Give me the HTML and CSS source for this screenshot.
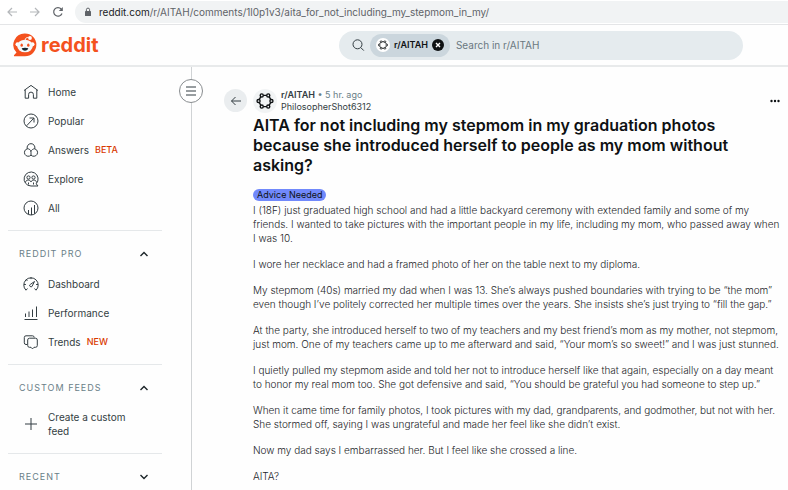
FILE: index.html
```html
<!DOCTYPE html>
<html lang="en">
<head>
<meta charset="UTF-8" />
<meta name="viewport" content="width=device-width, initial-scale=1" />
<title>AITA for not including my stepmom in my graduation photos : r/AITAH</title>
<link rel="stylesheet" href="styles.css">
</head>
<body>
  <!-- Browser bar -->
  <div class="browser-bar">
    <button class="nav-btn dim" aria-label="Back">
      <svg width="12" height="12" viewBox="0 0 12 12"><path d="M11 6H2M6 2L2 6l4 4" /></svg>
    </button>
    <button class="nav-btn dim" aria-label="Forward">
      <svg width="12" height="12" viewBox="0 0 12 12"><path d="M1 6h9M6 2l4 4-4 4" /></svg>
    </button>
    <button class="nav-btn" aria-label="Reload">
      <svg width="12" height="12" viewBox="0 0 12 12"><path d="M10 7.5A4.3 4.3 0 1 1 9.2 3" /><path class="solid" d="M10.8 1v4H6.8z" /></svg>
    </button>
    <div class="address">
      <svg width="8" height="10" viewBox="0 0 8 10"><rect x="1" y="4" width="6" height="5" rx="0.6" fill="#5f6368" /><path d="M2.4 4V2.7a1.6 1.6 0 0 1 3.2 0V4" fill="none" stroke="#5f6368" /></svg>
      <span><b>reddit.com</b>/r/AITAH/comments/1l0p1v3/aita_for_not_including_my_stepmom_in_my/</span>
    </div>
  </div>

  <header>
    <a class="logo" href="#">
      <svg width="24" height="24" viewBox="0 0 24 24">
        <path d="M12 0.5a11.3 11.3 0 1 1 0 22.7H1.6c-.7 0-.9-.7-.4-1.1l2.3-2.5A11.3 11.3 0 0 1 12 .5z" fill="#f4511e" />
        <path d="M12.2 7c.2-2 1.2-2.7 3.3-2.4" fill="none" stroke="#fff" stroke-width="0.9" />
        <circle cx="17" cy="5" r="1.9" fill="#fff" />
        <circle cx="4.6" cy="11.3" r="2.1" fill="#fff" />
        <circle cx="19.4" cy="11.3" r="2.1" fill="#fff" />
        <ellipse cx="12" cy="13" rx="7.8" ry="6.3" fill="#f4f9fb" />
        <ellipse cx="8.7" cy="12.2" rx="1.2" ry="1.6" fill="#f4511e" />
        <ellipse cx="15.3" cy="12.2" rx="1.2" ry="1.6" fill="#f4511e" />
        <path d="M8.7 15.3q3.300-1 6.600 0c-.5 3.300-6.100 3.300-6.600 0z" fill="#16272f" />
      </svg>
      <span>reddit</span>
    </a>
    <div class="search">
      <svg class="icon" width="14" height="14" viewBox="0 0 14 14"><circle cx="6.5" cy="6.3" r="4.5" /><path d="M9.800 9.600l3 3" /></svg>
      <div class="chip">
        <svg class="badge" width="14" height="14" viewBox="0 0 28 28"><circle cx="14" cy="14" r="14" fill="#fff" /><use href="#ring" /></svg>
        <span>r/AITAH</span>
        <button aria-label="Remove filter">
          <svg width="12" height="12" viewBox="0 0 12 12"><circle cx="6" cy="6" r="6" fill="#0e1113" /><path d="M4 4l4 4M8 4l-4 4" stroke="#fff" stroke-width="1.4" /></svg>
        </button>
      </div>
      <input type="text" aria-label="Search" placeholder="Search in r/AITAH" />
    </div>
  </header>

  <div class="layout">
    <nav class="sidebar">
      <button class="menu-toggle" aria-label="Toggle menu">
        <svg class="icon" width="12" height="12" viewBox="0 0 12 12"><path d="M1 2h10M1 6h10M1 10h10" /></svg>
      </button>

      <div class="group">
        <a class="item" href="#">
          <svg class="icon" width="16" height="16" viewBox="0 0 16 16"><path d="M1 6.500L8 1.400l7 5.100M2.200 6v8.200h3.400v-3.700a2.400 2.400 0 0 1 4.800 0v3.700h3.400V6" /></svg>
          <span>Home</span>
        </a>
        <a class="item" href="#">
          <svg class="icon" width="16" height="16" viewBox="0 0 16 16"><circle cx="8" cy="8" r="7" /><path d="M3.700 12.700L10.800 5.200M6.500 5h4.500v4.500" /></svg>
          <span>Popular</span>
        </a>
        <a class="item" href="#">
          <svg class="icon" width="16" height="16" viewBox="0 0 16 16"><path d="M4.300 6.800a3.900 3.900 0 1 1 7.400 0M4.300 6.800a3.800 3.800 0 1 0 3.700 6.300 3.800 3.800 0 1 0 3.700-6.300M4.300 6.800c1.800-.2 3.700 1.200 3.700 3.400v2.900M11.700 6.800C10 6.800 8.500 8 8 9.500" /></svg>
          <span>Answers</span>
          <span class="tag">BETA</span>
        </a>
        <a class="item" href="#">
          <svg class="icon" width="16" height="16" viewBox="0 0 16 16"><path d="M13.200 12.800A7 7 0 1 0 8 15h7z" /><circle cx="5.500" cy="6.500" r="1.600" /><circle cx="10.500" cy="6.500" r="1.600" /><path d="M2.500 11.500c.3-3.200 4.600-3.200 5.500-.6.900-2.600 5.200-2.600 5.500.6M5.500 11.500v2M10.500 11.500v2" /></svg>
          <span>Explore</span>
        </a>
        <a class="item" href="#">
          <svg class="icon" width="16" height="16" viewBox="0 0 16 16"><circle cx="8" cy="8" r="7" /><path d="M5.500 10v4.200M8.500 7.500V15M11.500 5v8.800" /></svg>
          <span>All</span>
        </a>
      </div>

      <div class="group">
        <button class="group-title">
          <span>REDDIT PRO</span>
          <svg class="chevron" width="10" height="10" viewBox="0 0 10 10"><path d="M1.500 7L5 3.500 8.500 7" /></svg>
        </button>
        <a class="item" href="#">
          <svg class="icon" width="16" height="16" viewBox="0 0 16 16"><path d="M4.500 12.500l-1.500 1.700a7.200 7.200 0 1 1 10 0l-1.500-1.700M8 1.200v1.900M1 8.500h1.900M13.100 8.500H15M3.200 3.700l1.200 1.200" /><path d="M11.500 5.500L9.200 10a1.300 1.300 0 1 1-1.700-1.700z" /></svg>
          <span>Dashboard</span>
        </a>
        <a class="item" href="#">
          <svg class="icon" width="16" height="16" viewBox="0 0 16 16"><path d="M1.500 14.500h13M2.500 8.500V12M6 6.500V12M9.500 4.500V12M13.500 1.500V12" /></svg>
          <span>Performance</span>
        </a>
        <a class="item" href="#">
          <svg class="icon" width="16" height="16" viewBox="0 0 16 16"><path d="M4 10.500H3a1.700 1.700 0 0 1-1.700-1.700V3.500A1.700 1.700 0 0 1 3 1.800h6.500a1.700 1.700 0 0 1 1.700 1.700M6.500 4.200h6a1.800 1.800 0 0 1 1.800 1.800v5.500a1.800 1.800 0 0 1-1.800 1.800h-1.500l-1.500 1.600-1.500-1.600H6.500a1.800 1.800 0 0 1-1.800-1.800V6a1.800 1.800 0 0 1 1.800-1.800z" /></svg>
          <span>Trends</span>
          <span class="tag">NEW</span>
        </a>
      </div>

      <div class="group">
        <button class="group-title">
          <span>CUSTOM FEEDS</span>
          <svg class="chevron" width="10" height="10" viewBox="0 0 10 10"><path d="M1.500 7L5 3.500 8.500 7" /></svg>
        </button>
        <a class="item tall" href="#">
          <svg class="icon" width="16" height="16" viewBox="0 0 16 16"><path d="M8 2v12M2 8h12" /></svg>
          <span>Create a custom feed</span>
        </a>
      </div>

      <div class="group">
        <button class="group-title">
          <span>RECENT</span>
          <svg class="chevron" width="10" height="10" viewBox="0 0 10 10"><path d="M1.500 3L5 6.500 8.500 3" /></svg>
        </button>
      </div>
    </nav>

    <main>
      <button class="back" aria-label="Back">
        <svg class="icon" width="12" height="12" viewBox="0 0 12 12"><path d="M11 6H1.500M5.500 2l-4 4 4 4" /></svg>
      </button>
      <article>
        <div class="post-head">
          <svg class="avatar" width="24" height="24" viewBox="0 0 28 28">
            <circle cx="14" cy="14" r="14" fill="#f2f4f5" />
            <g id="ring" fill="none" stroke="#0e1113" stroke-width="1.6">
              <path d="M12 7.500h4M19 9.200l1.600 2.800M20.600 16L19 18.800M16 20.500h-4M9 18.800L7.400 16M7.400 12L9 9.200" />
              <circle cx="10.200" cy="7.500" r="1.800" /><circle cx="17.800" cy="7.500" r="1.800" />
              <circle cx="6.500" cy="14" r="1.800" /><circle cx="21.500" cy="14" r="1.800" />
              <circle cx="10.200" cy="20.500" r="1.800" /><circle cx="17.800" cy="20.500" r="1.800" />
            </g>
          </svg>
          <div class="meta">
            <div><a class="sub" href="#">r/AITAH</a> <span class="time">• 5 hr. ago</span></div>
            <a href="#">PhilosopherShot6312</a>
          </div>
          <button class="more" aria-label="More options">
            <svg width="10" height="4" viewBox="0 0 10 4"><circle cx="1.500" cy="2" r="1.200" /><circle cx="5" cy="2" r="1.200" /><circle cx="8.500" cy="2" r="1.200" /></svg>
          </button>
        </div>
        <h1>AITA for not including my stepmom in my graduation photos because she introduced herself to people as my mom without asking?</h1>
        <a class="flair" href="#">Advice Needed</a>
        <div class="post-body">
          <p>I (18F) just graduated high school and had a little backyard ceremony with extended family and some of my friends. I wanted to take pictures with the important people in my life, including my mom, who passed away when I was 10.</p>
          <p>I wore her necklace and had a framed photo of her on the table next to my diploma.</p>
          <p>My stepmom (40s) married my dad when I was 13. She’s always pushed boundaries with trying to be “the mom” even though I’ve politely corrected her multiple times over the years. She insists she’s just trying to “fill the gap.”</p>
          <p>At the party, she introduced herself to two of my teachers and my best friend’s mom as my mother, not stepmom, just mom. One of my teachers came up to me afterward and said, “Your mom’s so sweet!” and I was just stunned.</p>
          <p>I quietly pulled my stepmom aside and told her not to introduce herself like that again, especially on a day meant to honor my real mom too. She got defensive and said, “You should be grateful you had someone to step up.”</p>
          <p>When it came time for family photos, I took pictures with my dad, grandparents, and godmother, but not with her. She stormed off, saying I was ungrateful and made her feel like she didn’t exist.</p>
          <p>Now my dad says I embarrassed her. But I feel like she crossed a line.</p>
          <p>AITA?</p>
        </div>
      </article>
    </main>
  </div>
</body>
</html>
```
FILE: styles.css
```css
/* Reset */
* {
  box-sizing: border-box;
}
body {
  margin: 0;
  height: 100vh;
  overflow: hidden;
  display: flex;
  flex-direction: column;
  font-family: Inter, "Liberation Sans", sans-serif;
  font-size: 10px;
  line-height: 14px;
  color: #333d42;
  background: #fefefe;
}
a {
  color: inherit;
  text-decoration: none;
}
button {
  display: flex;
  align-items: center;
  justify-content: center;
  padding: 0;
  border: none;
  background: none;
  font: inherit;
  color: inherit;
  cursor: pointer;
}
svg {
  flex: none;
}
.icon {
  fill: none;
  stroke: #333d42;
  stroke-width: 1;
}

/* Browser bar */
.browser-bar {
  flex: none;
  display: flex;
  align-items: center;
  gap: 11px;
  height: 25px;
  padding-left: 6px;
  border-bottom: 1px solid #e4e5e7;
  background: #fff;
}
.nav-btn svg {
  fill: none;
  stroke: #5f6368;
  stroke-width: 1.2;
}
.nav-btn .solid {
  fill: #5f6368;
  stroke: none;
}
.dim svg {
  stroke: #b4b7ba;
}
.address {
  flex: 1;
  display: flex;
  align-items: center;
  gap: 7px;
  height: 22px;
  padding-left: 9px;
  border-radius: 11px 0 0 11px;
  background: #f1f3f4;
  color: #5f6368;
}
.address b {
  font-weight: 400;
  color: #202124;
}

/* Header */
header {
  flex: none;
  display: flex;
  align-items: center;
  height: 42px;
  padding: 0 45px 0 13px;
  border-bottom: 2px solid #e8eaeb;
}
.logo {
  flex: 1;
  display: flex;
  align-items: center;
  gap: 4px;
  color: #f4511e;
  font-size: 20px;
  line-height: 24px;
  font-weight: 700;
}
.search {
  flex: none;
  display: flex;
  align-items: center;
  width: 404px;
  height: 29px;
  padding-left: 12px;
  border-radius: 15px;
  background: #e5ebee;
}
.chip {
  display: flex;
  align-items: center;
  gap: 4px;
  height: 23px;
  margin: 0 6px 0 5px;
  padding: 0 6px;
  border-radius: 12px;
  background: #cbd6dd;
  color: #0e1113;
  font-size: 9px;
  font-weight: 600;
}
.search input {
  flex: 1;
  min-width: 0;
  padding: 0;
  border: none;
  outline: none;
  background: none;
  font: inherit;
  color: #333d42;
}
.search input::placeholder {
  color: #6a7880;
}

/* Sidebar */
.layout {
  flex: 1;
  min-height: 0;
  display: flex;
}
.sidebar {
  position: relative;
  flex: none;
  width: 192px;
  padding: 10px 29px 0 8px;
  border-right: 1px solid #d0d3d5;
}
.menu-toggle {
  position: absolute;
  top: 12px;
  right: -12px;
  width: 24px;
  height: 24px;
  border: 1px solid #888c8f;
  border-radius: 50%;
  background: #fff;
}
.group {
  padding-bottom: 8px;
}
.group + .group {
  padding-top: 8px;
  border-top: 1px solid #e5e8ea;
}
.group-title {
  width: 100%;
  height: 30px;
  justify-content: space-between;
  padding: 0 13px 0 11px;
  color: #6a7f88;
  font-size: 9px;
  letter-spacing: 1px;
}
.chevron {
  fill: none;
  stroke: #1c2529;
  stroke-width: 1.4;
}
.item {
  display: flex;
  align-items: center;
  gap: 9px;
  height: 29px;
  padding: 0 30px 0 15px;
}
.item.tall {
  height: 42px;
}
.tag {
  margin-left: -3px;
  color: #d93900;
  font-size: 9px;
  font-weight: 500;
}

/* Post */
main {
  flex: 1;
  min-width: 0;
  display: flex;
  align-items: flex-start;
  gap: 6px;
  padding: 21px 8px 0 32px;
}
.back {
  flex: none;
  width: 23px;
  height: 23px;
  margin-top: 1px;
  border-radius: 50%;
  background: #eaedef;
}
article {
  flex: 1;
  min-width: 0;
}
.post-head {
  display: flex;
  align-items: center;
  gap: 4px;
  height: 26px;
}
.meta {
  flex: 1;
  font-size: 9px;
  line-height: 12px;
}
.sub {
  font-weight: 600;
}
.time {
  color: #6a7f88;
}
.more svg {
  fill: #0e1113;
}
h1 {
  margin: 1px 0 14px;
  padding-right: 40px;
  color: #0e1113;
  font-size: 16px;
  line-height: 20px;
  font-weight: 600;
}
.flair {
  display: block;
  width: fit-content;
  padding: 0 4px;
  border-radius: 6px;
  background: #7189fb;
  color: #0e1113;
  font-size: 9px;
  line-height: 12px;
}
.post-body {
  margin-top: 2px;
  font-weight: 300;
  color: #1c2529;
}
.post-body p {
  margin: 0 0 12px;
}
```
